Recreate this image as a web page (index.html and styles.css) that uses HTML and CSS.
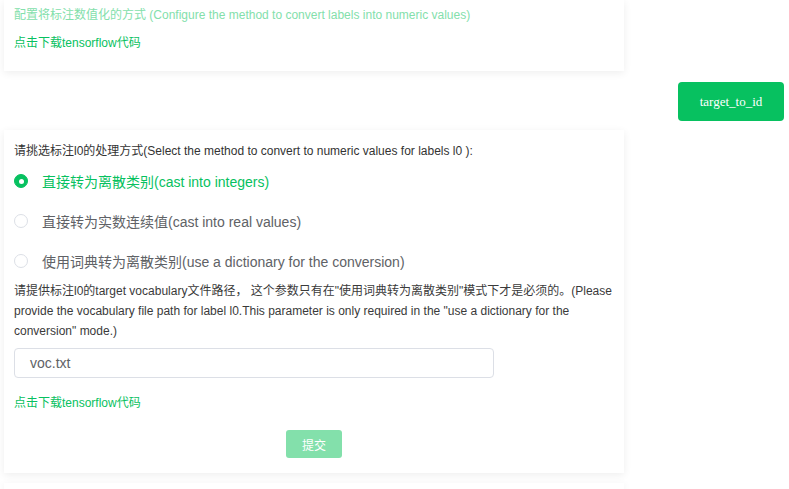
FILE: index.html
```html
<!DOCTYPE html>
<html lang="zh">
<head>
<meta charset="utf-8">
<link rel="stylesheet" href="styles.css">
</head>
<body>
<div class="page">
  <section class="card card-top">
    <p class="hint">配置将标注数值化的方式 (Configure the method to convert labels into numeric values)</p>
    <a class="download">点击下载tensorflow代码</a>
  </section>

  <div class="actions">
    <button class="btn-target">target_to_id</button>
  </div>

  <section class="card card-form">
    <p class="title">请挑选标注l0的处理方式(Select the method to convert to numeric values for labels l0 ):</p>
    <div class="radios">
      <label class="radio checked"><span class="dot"></span><span class="label">直接转为离散类别(cast into integers)</span></label>
      <label class="radio"><span class="dot"></span><span class="label">直接转为实数连续值(cast into real values)</span></label>
      <label class="radio"><span class="dot"></span><span class="label">使用词典转为离散类别(use a dictionary for the conversion)</span></label>
    </div>
    <p class="desc">请提供标注l0的target vocabulary文件路径， 这个参数只有在"使用词典转为离散类别"模式下才是必须的。(Please provide the vocabulary file path for label l0.This parameter is only required in the "use a dictionary for the conversion" mode.)</p>
    <div class="input">voc.txt</div>
    <a class="download link2">点击下载tensorflow代码</a>
    <div class="submit-row"><button class="btn-submit">提交</button></div>
  </section>

  <section class="card card-bottom"></section>
</div>
</body>
</html>
```
FILE: styles.css
```css
html, body {
  margin: 0;
  padding: 0;
  background: #fff;
}
body {
  font-family: "Liberation Sans", "Noto Sans CJK SC", sans-serif;
  font-size: 12px;
  color: #333;
}
.page {
  padding: 0 5px 0 4px;
}
.card {
  width: 620px;
  box-sizing: border-box;
  background: #fff;
  box-shadow: 0 2px 8px rgba(0, 0, 0, 0.07);
  padding: 0 10px;
}
.card-top {
  padding-top: 5px;
  padding-bottom: 18px;
}
.hint {
  margin: 0;
  line-height: 20px;
  color: #83e0ab;
}
.download {
  display: block;
  margin-top: 8px;
  line-height: 20px;
  color: #07c160;
  cursor: pointer;
}
.actions {
  display: flex;
  justify-content: flex-end;
  margin-top: 11px;
  margin-bottom: 9px;
}
.btn-target {
  width: 106px;
  height: 39px;
  border: none;
  border-radius: 4px;
  background: #07c160;
  color: #fff;
  font-family: "Liberation Serif", serif;
  font-size: 13px;
  padding: 0;
}
.card-form {
  padding-top: 11px;
  padding-bottom: 15px;
}
.title {
  margin: 0;
  line-height: 20px;
  color: #333;
}
.radios {
  display: flex;
  flex-direction: column;
}
.radio {
  display: flex;
  align-items: center;
  height: 40px;
  font-size: 14px;
  color: #606266;
}
.radio:last-child {
  height: 39px;
  padding-bottom: 1px;
}
.radio .dot {
  width: 14px;
  height: 14px;
  box-sizing: border-box;
  border: 1px solid #dcdfe6;
  border-radius: 50%;
  margin-right: 14px;
  display: flex;
  align-items: center;
  justify-content: center;
  background: #fff;
}
.radio.checked {
  color: #07c160;
}
.radio.checked .dot {
  background: #07c160;
  border-color: #07c160;
}
.radio.checked .dot::after {
  content: "";
  width: 5px;
  height: 5px;
  border-radius: 50%;
  background: #fff;
}
.desc {
  margin: 0;
  line-height: 20px;
  color: #3a3a3a;
}
.input {
  margin-top: 7px;
  width: 480px;
  height: 30px;
  box-sizing: border-box;
  border: 1px solid #dcdfe6;
  border-radius: 4px;
  padding: 0 15px;
  line-height: 28px;
  font-size: 14px;
  color: #606266;
}
.link2 {
  margin-top: 15px;
}
.submit-row {
  display: flex;
  justify-content: center;
  margin-top: 17px;
}
.btn-submit {
  width: 56px;
  height: 28px;
  border: none;
  border-radius: 3px;
  background: #83e0ab;
  color: #fff;
  font-family: "Liberation Sans", "Noto Sans CJK SC", sans-serif;
  font-size: 12px;
  padding: 0;
}
.card-bottom {
  margin-top: 10px;
  height: 6px;
}
```
